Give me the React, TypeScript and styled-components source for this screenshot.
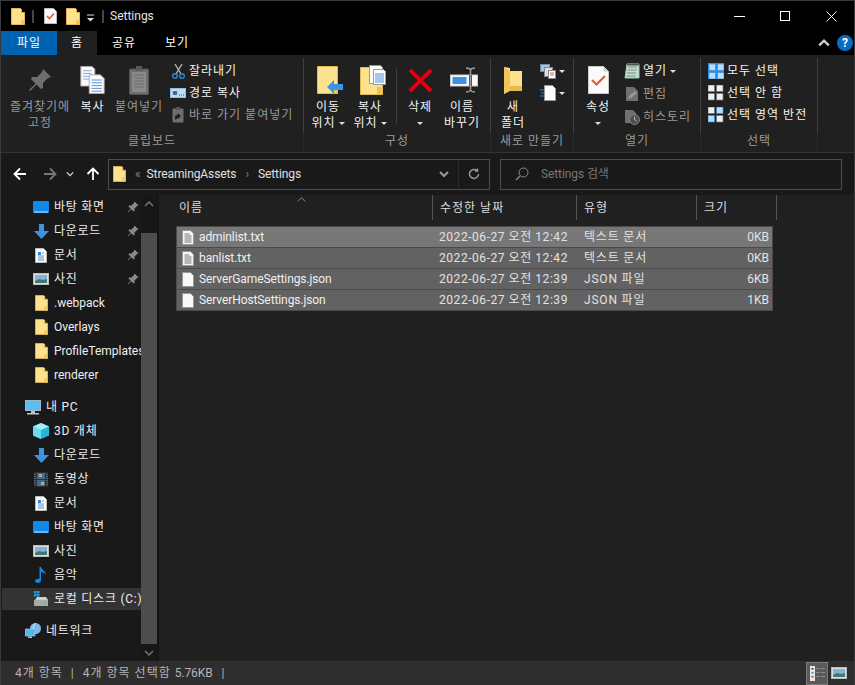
import styled, { createGlobalStyle } from "styled-components";

const GlobalStyle = createGlobalStyle`
  html, body {
    margin: 0;
    padding: 0;
    background: #000;
  }
  * {
    box-sizing: border-box;
  }
  svg {
    display: block;
    flex-shrink: 0;
  }
`;

const Window = styled.div`
  width: 855px;
  height: 685px;
  display: flex;
  flex-direction: column;
  overflow: hidden;
  border: 1px solid #3a3a3a;
  border-bottom: 0;
  background: #202020;
  color: #fff;
  font-family: Roboto, "Noto Sans CJK KR", sans-serif;
  font-size: 12px;
  line-height: 16px;
  letter-spacing: 1px;
`;

const Latin = styled.span`
  letter-spacing: -0.1px;
`;

const TitleBar = styled.div`
  height: 30px;
  display: flex;
  align-items: center;
  background: #000;
  padding-left: 10px;
`;

const TitleSep = styled.div<{ $l: number; $r: number }>`
  width: 2px;
  height: 13px;
  background: #444;
  margin: 0 ${(p) => p.$r}px 0 ${(p) => p.$l}px;
`;

const TitleSpace = styled.div<{ $w: number }>`
  width: ${(p) => p.$w}px;
`;

const TitleText = styled.span`
  flex: 1;
  color: #e6e6e6;
  letter-spacing: 0;
`;

const WinButton = styled.div`
  width: 46px;
  height: 30px;
  display: flex;
  align-items: center;
  justify-content: center;
`;

const TabRow = styled.div`
  height: 24px;
  display: flex;
  background: #000;
  align-items: stretch;
`;

const Tab = styled.div<{ $w: number; $kind?: "file" | "active" }>`
  width: ${(p) => p.$w}px;
  display: flex;
  align-items: center;
  justify-content: center;
  background: ${(p) =>
    p.$kind === "file" ? "#0063b1" : p.$kind === "active" ? "#202020" : "#000"};
`;

const TabSpacer = styled.div`
  flex: 1;
  display: flex;
  align-items: center;
  justify-content: flex-end;
  gap: 7px;
  padding-right: 1px;
`;

const HelpBadge = styled.div`
  width: 16px;
  height: 16px;
  border-radius: 50%;
  background: #0a6cc4;
  color: #fff;
  font-weight: 700;
  font-size: 12px;
  line-height: 16px;
  text-align: center;
  letter-spacing: 0;
`;

const Ribbon = styled.div`
  height: 98px;
  display: flex;
  background: #202020;
  border-bottom: 1px solid #333;
`;

const Group = styled.div<{ $w: number }>`
  width: ${(p) => p.$w}px;
  display: flex;
  flex-direction: column;
`;

const GroupBody = styled.div<{ $pl: number }>`
  height: 75px;
  display: flex;
  padding-left: ${(p) => p.$pl}px;
  padding-top: 3px;
  border-right: 1px solid #404040;
  margin-top: 3px;
`;

const GroupLabel = styled.div`
  flex: 1;
  display: flex;
  align-items: center;
  justify-content: center;
  padding-bottom: 3px;
  color: #9a9a9a;
  border-right: 1px solid #2a2a2a;
`;

const BigButton = styled.div<{ $w: number; $off?: boolean }>`
  width: ${(p) => p.$w}px;
  display: flex;
  flex-direction: column;
  align-items: center;
  color: ${(p) => (p.$off ? "#9a9a9a" : "#f2f2f2")};
  text-align: center;
  white-space: nowrap;
`;

const BigIcon = styled.div<{ $dx?: number }>`
  height: 38px;
  display: flex;
  align-items: center;
  justify-content: center;
  padding-left: ${(p) => p.$dx ?? 0}px;
`;

const ButtonLine = styled.div`
  display: flex;
  align-items: center;
  justify-content: center;
  gap: 3px;
  height: 16px;
`;

const Caret = styled.span`
  width: 0;
  height: 0;
  border-left: 3px solid transparent;
  border-right: 3px solid transparent;
  border-top: 3px solid #ddd;
  display: inline-block;
`;

const SmallColumn = styled.div<{ $ml: number; $gap: number }>`
  display: flex;
  flex-direction: column;
  gap: ${(p) => p.$gap}px;
  margin-left: ${(p) => p.$ml}px;
  padding-top: 2px;
`;

const SmallButton = styled.div<{ $off?: boolean }>`
  height: 16px;
  display: flex;
  align-items: center;
  gap: 3px;
  white-space: nowrap;
  color: ${(p) => (p.$off ? "#9a9a9a" : "#f2f2f2")};
`;

const IconSlot = styled.div`
  width: 16px;
  display: flex;
  justify-content: center;
`;

const VSep = styled.div`
  width: 1px;
  height: 55px;
  background: #404040;
  margin: 8px 0 0 5px;
`;

const MiniColumn = styled.div`
  display: flex;
  flex-direction: column;
  gap: 6px;
  margin-left: 8px;
  padding-top: 2px;
`;

const MiniButton = styled.div`
  display: flex;
  align-items: center;
  gap: 3px;
  height: 16px;
`;

const NavBar = styled.div`
  height: 42px;
  display: flex;
  align-items: center;
  background: #191919;
`;

const NavButtons = styled.div`
  width: 107px;
  display: flex;
  align-items: center;
  padding-left: 12px;
`;

const NavGap = styled.span<{ $w: number }>`
  width: ${(p) => p.$w}px;
`;

const AddressBox = styled.div<{ $w: number }>`
  width: ${(p) => p.$w}px;
  height: 31px;
  display: flex;
  align-items: center;
  border: 1px solid #4d4d4d;
  background: #191919;
`;

const AddressDivider = styled.span`
  width: 1px;
  height: 100%;
  background: #2b2b2b;
`;

const Crumb = styled.span<{ $c?: string; $ml: number }>`
  color: ${(p) => p.$c ?? "#e0e0e0"};
  margin-left: ${(p) => p.$ml}px;
  letter-spacing: -0.1px;
`;

const AddressFill = styled.span`
  flex: 1;
`;

const Body = styled.div`
  flex: 1;
  min-height: 0;
  display: flex;
`;

const NavPane = styled.div`
  width: 158px;
  display: flex;
  background: #191919;
  border-right: 2px solid #141414;
`;

const NavList = styled.div`
  width: 140px;
  padding: 1px 0 0 1px;
  overflow: hidden;
`;

const NavRow = styled.div<{ $indent: number; $gapTop?: boolean; $active?: boolean }>`
  height: 22px;
  margin: ${(p) => (p.$gapTop ? "10px" : "2px")} 0 0;
  display: flex;
  align-items: center;
  padding-left: ${(p) => p.$indent}px;
  gap: 5px;
  white-space: nowrap;
  color: #eee;
  background: ${(p) => (p.$active ? "#333" : "transparent")};
  &:first-child {
    margin-top: 0;
  }
`;

const NavName = styled.span<{ $latin?: boolean }>`
  flex: 1;
  overflow: hidden;
  letter-spacing: ${(p) => (p.$latin ? "0" : "0.75px")};
`;

const PinSlot = styled.div`
  width: 16px;
  display: flex;
  justify-content: center;
`;

const ScrollBar = styled.div`
  width: 16px;
  display: flex;
  flex-direction: column;
  background: #171717;
`;

const ScrollArrow = styled.div`
  height: 17px;
  display: flex;
  align-items: center;
  justify-content: center;
`;

const ScrollThumb = styled.div`
  flex: 1;
  margin-top: 21px;
  background: #4d4d4d;
`;

const ContentPane = styled.div`
  flex: 1;
  position: relative;
  background: #202020;
`;

const HeaderRow = styled.div`
  height: 25px;
  display: flex;
  padding-left: 13px;
`;

const HeaderCell = styled.div<{ $w: number }>`
  width: ${(p) => p.$w}px;
  display: flex;
  align-items: center;
  padding-left: 7px;
  border-right: 1px solid #555;
  color: #ddd;
`;

const SortArrow = styled.div`
  position: absolute;
  top: 0;
  left: 138px;
`;

const FileList = styled.div`
  margin: 6px 0 0 17px;
  width: 597px;
  display: flex;
  flex-direction: column;
  border: 1px solid #4a4a4a;
  background: #4a4a4a;
  gap: 1px;
`;

const FileRow = styled.div<{ $hover?: boolean }>`
  height: 20px;
  display: grid;
  grid-template-columns: 262px 145px 112px 1fr;
  align-items: center;
  background: ${(p) => (p.$hover ? "#777" : "#626262")};
  color: #f0f0f0;
  white-space: nowrap;
`;

const NameCell = styled.div`
  display: flex;
  align-items: center;
  gap: 5px;
  padding-left: 5px;
`;

const DateCell = styled.div`
  color: #e2e2e2;
  letter-spacing: 0.55px;
`;

const TypeCell = styled.div`
  color: #e2e2e2;
  letter-spacing: 0.8px;
`;

const SizeCell = styled.div`
  text-align: right;
  padding-right: 3px;
  letter-spacing: 0;
  color: #e2e2e2;
`;

const StatusBar = styled.div`
  height: 24px;
  display: flex;
  align-items: center;
  background: #2e2e2e;
  color: #b4b4b4;
  padding-left: 14px;
  white-space: nowrap;
`;

const StatusText = styled.span<{ $ml: number }>`
  margin-left: ${(p) => p.$ml}px;
`;

const ViewButtons = styled.div`
  margin-left: auto;
  display: flex;
  align-items: center;
  padding-right: 4px;
  height: 100%;
`;

const ViewButton = styled.div<{ $on?: boolean }>`
  width: 22px;
  height: 23px;
  display: flex;
  align-items: center;
  justify-content: center;
  background: ${(p) => (p.$on ? "#5a5a5a" : "transparent")};
  border: 1px solid ${(p) => (p.$on ? "#7a7a7a" : "transparent")};
`;

/* ---- icons ---- */

const Folder = ({ w = 14, h = 17 }: { w?: number; h?: number }) => (
  <svg width={w} height={h} viewBox="0 0 14 17">
    <path d="M.5.5h9l1 1v3h3v12H.5z" fill="#fde28e" stroke="#e3b652" />
    <path d="M10 12h3.500v4.500H10z" fill="#f3c659" />
  </svg>
);

const NoteCheck = () => (
  <svg width="13" height="16" viewBox="0 0 13 16">
    <path d="M.5.5h9l3 3v12H.5z" fill="#fafafa" stroke="#bbb" />
    <path d="M3 8l2.400 2.600L10 5.500" fill="none" stroke="#e0562a" strokeWidth="1.500" />
  </svg>
);

const Chevron = ({ dir, c = "#ccc", s = 10, sw = 1.5 }: { dir: "up" | "down"; c?: string; s?: number; sw?: number }) => (
  <svg width={s} height={s} viewBox="0 0 10 10">
    <path d={dir === "up" ? "M1 7l4-4 4 4" : "M1 3l4 4 4-4"} fill="none" stroke={c} strokeWidth={sw} />
  </svg>
);

const Arrow = ({ dir, c }: { dir: "left" | "right" | "up"; c: string }) => {
  const rotate = dir === "left" ? 0 : dir === "right" ? 180 : 90;
  return (
    <svg width="14" height="14" viewBox="0 0 14 14" style={{ transform: `rotate(${rotate}deg)` }}>
      <path d="M13 7H1.500M7 1.500L1.500 7 7 12.500" fill="none" stroke={c} strokeWidth="1.800" />
    </svg>
  );
};

const Pin = ({ s = 12, c = "#8a8a8a" }: { s?: number; c?: string }) => (
  <svg width={s} height={s} viewBox="0 0 24 24">
    <path d="M15 1l8 8-3 1-5 5 0 5-2 1-4.500-4.500L2 23l-1-1 6.500-6.500L3 11l1-2h5l5-5z" fill={c} />
  </svg>
);

const Copy = () => (
  <svg width="25" height="28" viewBox="0 0 26 30">
    <path d="M.5.5h12l3 3v18H.5z" fill="#fafafa" stroke="#aaa" />
    <path d="M3 5h9M3 8h9M3 11h9M3 14h9" stroke="#7ea6dc" />
    <path d="M9.500 9.500h12l4 4v16h-16z" fill="#fafafa" stroke="#aaa" />
    <path d="M12 15h11M12 18h11M12 21h11M12 24h11M12 27h11" stroke="#4f8ddb" />
  </svg>
);

const Clipboard = () => (
  <svg width="20" height="29" viewBox="0 0 20 29">
    <rect x=".5" y="3" width="19" height="25.500" rx="1" fill="#6f6f6f" stroke="#555" />
    <rect x="3" y="6" width="14" height="20" fill="#8a8a8a" />
    <path d="M5 9h10M5 12h10M5 15h10M5 18h10M5 21h10" stroke="#6a6a6a" />
    <rect x="7" y="0" width="6" height="5" fill="#5a5a5a" />
  </svg>
);

const Scissors = () => (
  <svg width="13" height="16" viewBox="0 0 13 16">
    <path d="M3 1l6 10M10 1L4 11" stroke="#b5b5b5" strokeWidth="1.400" fill="none" />
    <circle cx="3" cy="13" r="2.300" fill="none" stroke="#2f86d6" strokeWidth="1.400" />
    <circle cx="10" cy="13" r="2.300" fill="none" stroke="#2f86d6" strokeWidth="1.400" />
  </svg>
);

const PathCopy = () => (
  <svg width="16" height="10" viewBox="0 0 16 10">
    <rect x=".5" y=".5" width="15" height="9" fill="#bcdcf7" stroke="#8fbde6" />
    <path d="M3 3l1 4 1-4 1 4 1-4M9 7h1M11 7h1M13 7h1" stroke="#234" fill="none" strokeWidth=".8" />
  </svg>
);

const ShortcutPaste = () => (
  <svg width="12" height="16" viewBox="0 0 12 16">
    <rect x=".5" y="1.500" width="11" height="14" rx="1" fill="#6f6f6f" />
    <rect x="4" y="0" width="4" height="3" fill="#555" />
    <path d="M3 13V9l3-2v-1l3 3-3 3v-1l-1.500 1z" fill="#222" />
  </svg>
);

const MoveTo = () => (
  <svg width="26" height="28" viewBox="0 0 26 28">
    <path d="M.5.5h20v27H.5z" fill="#fde28e" stroke="#e3b652" />
    <path d="M17 21h3.500v6.500H17z" fill="#f0c259" />
    <path d="M10 21l7-7v4h9v6h-9v4z" fill="#3c94e6" />
  </svg>
);

const CopyTo = () => (
  <svg width="26" height="30" viewBox="0 0 26 30">
    <path d="M.5 2.500h22v27H.5z" fill="#fde28e" stroke="#e3b652" />
    <path d="M17 22h5.500v7.500H17z" fill="#f0c259" />
    <path d="M9.500.5h11l2 2v16h-13z" fill="#fff" stroke="#999" />
    <path d="M13.500 4.500h10l2 2v13h-12z" fill="#fff" stroke="#999" />
    <path d="M15 9h9M15 11h9M15 13h9M15 15h9M15 17h9" stroke="#4f8ddb" />
  </svg>
);

const DeleteX = () => (
  <svg width="25" height="25" viewBox="0 0 26 26">
    <path d="M2 2l22 22M24 2L2 24" stroke="#e00012" strokeWidth="4" />
  </svg>
);

const Rename = () => (
  <svg width="28" height="26" viewBox="0 0 28 26">
    <rect x=".5" y="8" width="27" height="11" fill="#fafafa" stroke="#ccc" />
    <rect x="2.500" y="10" width="14" height="7" fill="#3a93e4" />
    <rect x="19" y="8" width="3" height="11" fill="#444" />
    <path d="M16 1c3 0 4 1 4.500 2 .5-1 1.500-2 4.500-2M16 25c3 0 4-1 4.500-2 .5 1 1.500 2 4.500 2M20.500 3v20" fill="none" stroke="#999" strokeWidth="1.500" />
  </svg>
);

const NewFolder = () => (
  <svg width="18" height="27" viewBox="0 0 18 27">
    <path d="M0 0l6 1v3h12v20H5l-5 3z" fill="#fde08a" />
    <path d="M0 0l6 4v20l-6 3z" fill="#f2c45c" />
    <path d="M6 19h12v5H6z" fill="#e9b94a" />
  </svg>
);

const NewItem = () => (
  <svg width="16" height="15" viewBox="0 0 16 15">
    <rect x=".5" y=".5" width="9" height="7" fill="#9cc8ef" stroke="#789" />
    <rect x="4.500" y="3.500" width="8" height="9" fill="#ddd" stroke="#888" />
    <rect x="8.500" y="6.500" width="7" height="8" fill="#fff" stroke="#888" />
    <path d="M10 9h4M10 11h4" stroke="#d66" />
  </svg>
);

const EasyAccess = () => (
  <svg width="16" height="16" viewBox="0 0 16 16">
    <path d="M4.500.5h8l3 3v12h-11z" fill="#fafafa" stroke="#999" />
    <path d="M0 5h4M1 8h3M0 11h4" stroke="#2f86d6" />
  </svg>
);

const Properties = () => (
  <svg width="21" height="28" viewBox="0 0 21 28">
    <path d="M.5.5h15l5 5v22H.5z" fill="#fafafa" stroke="#ccc" />
    <path d="M15.500.5v5h5" fill="#ccc" />
    <path d="M4 14l4.500 4.500L17 10" fill="none" stroke="#ea5b28" strokeWidth="2.200" />
  </svg>
);

const Notepad = () => (
  <svg width="16" height="16" viewBox="0 0 16 16">
    <path d="M3 1h12v14H1z" fill="#c8e0c8" stroke="#9cb" />
    <path d="M4 4h9M3.500 7h9M3 10h9M2.500 13h9" stroke="#789" />
    <path d="M3 1h12v1.500H3z" fill="#555" />
  </svg>
);

const EditIcon = () => (
  <svg width="14" height="16" viewBox="0 0 14 16">
    <path d="M1 1h8l4 4v10H1z" fill="#6f6f6f" />
    <path d="M3 13l1-3 6-5 2 2-6 5z" fill="#999" />
  </svg>
);

const History = () => (
  <svg width="16" height="16" viewBox="0 0 16 16">
    <path d="M1 1h8l3 3v10H1z" fill="#6f6f6f" />
    <circle cx="10.500" cy="10.500" r="5" fill="#4e4e4e" stroke="#888" />
    <path d="M10.500 7.500v3l2 1.500" stroke="#bbb" fill="none" />
  </svg>
);

const Grid4 = ({ kind }: { kind: "all" | "none" | "invert" }) => {
  const cells = [
    [0, 0, false],
    [8.5, 0, kind === "invert"],
    [0, 8.5, kind === "invert"],
    [8.5, 8.5, false],
  ] as const;
  return (
    <svg width="16" height="16" viewBox="0 0 16 16">
      {kind === "all" && <rect width="16" height="16" fill="#2f8fdf" />}
      {cells.map(([x, y, on], i) => {
        const blue = kind === "all" || on;
        return (
          <rect
            key={i}
            x={x + (kind === "all" ? 1 : 0)}
            y={y + (kind === "all" ? 1 : 0)}
            width="6.500"
            height="6.500"
            fill={blue ? "#bcdcf7" : "#f0f0f0"}
            stroke={blue ? "#2f8fdf" : "#777"}
            strokeWidth=".7"
          />
        );
      })}
    </svg>
  );
};

const Desktop = () => (
  <svg width="16" height="12" viewBox="0 0 16 12">
    <rect width="16" height="12" rx="1" fill="#0f8ae6" />
    <path d="M1 11h14" stroke="#bfe3fb" />
  </svg>
);

const Download = () => (
  <svg width="15" height="15" viewBox="0 0 15 15">
    <path d="M5 0h5v7h5l-7.500 8L0 7h5z" fill="#3a94e4" />
  </svg>
);

const DocIcon = () => (
  <svg width="12" height="15" viewBox="0 0 12 15">
    <path d="M.5.5h8l3 3v11H.5z" fill="#fafafa" stroke="#bbb" />
    <path d="M3 4h3v3H3z" fill="#2f86d6" />
    <path d="M3 8h6M3 10h6M3 12h6M7 5h2" stroke="#5d93cf" />
  </svg>
);

const Picture = () => (
  <svg width="16" height="12" viewBox="0 0 16 12">
    <rect x=".5" y=".5" width="15" height="11" fill="#ddd" stroke="#bbb" />
    <rect x="2" y="2" width="12" height="8" fill="#7fb5d8" />
    <path d="M2 8l4-2 4 1 4-1v4H2z" fill="#3f7a6b" />
  </svg>
);

const Monitor = () => (
  <svg width="16" height="15" viewBox="0 0 16 15">
    <rect x=".5" y=".5" width="15" height="10" fill="#56c0f2" stroke="#9fb5c4" />
    <path d="M6 11h4v2H6zM2 13h12v1.500H2z" fill="#b9c5cd" />
  </svg>
);

const Cube = () => (
  <svg width="16" height="16" viewBox="0 0 16 16">
    <path d="M8 0l8 3.500v9L8 16l-8-3.500v-9z" fill="#25b6d8" />
    <path d="M8 0l8 3.500L8 7 0 3.500z" fill="#a6ecf5" />
    <path d="M0 3.500L8 7v9l-8-3.500z" fill="#6bdcec" />
  </svg>
);

const Film = () => (
  <svg width="14" height="15" viewBox="0 0 14 15">
    <rect width="14" height="15" fill="#2e2e2e" />
    <rect x="3" y="1" width="8" height="6" fill="#3d6d9c" />
    <rect x="3" y="8" width="8" height="6" fill="#3d6d9c" />
    <path d="M5 2h3v3H5zM7 10h3v3H7z" fill="#d9a33a" />
    <path d="M1 2v11M13 2v11" stroke="#999" strokeDasharray="1 1" />
  </svg>
);

const Music = () => (
  <svg width="12" height="16" viewBox="0 0 12 16">
    <path d="M4.500 0h1.500c.5 3 5 4 5 8-1-2-3-3-5-3v8.500c0 1.500-1.500 2.500-3 2.500S0 15 0 13.800s1.800-2.300 4.500-2z" fill="#0f8ae6" />
  </svg>
);

const Drive = () => (
  <svg width="16" height="16" viewBox="0 0 16 16">
    <path d="M1 0h2.500v2.500H1zM4 0h2.500v2.500H4zM1 3h2.500v2.500H1zM4 3h2.500v2.500H4z" fill="#1d9be0" />
    <path d="M2 9l2-3h9l2 3z" fill="#cfcfcf" />
    <rect x="1" y="9" width="14" height="6" fill="#a9a9a9" />
    <rect x="11" y="11" width="2" height="1.500" fill="#2fd05a" />
  </svg>
);

const Network = () => (
  <svg width="17" height="16" viewBox="0 0 17 16">
    <circle cx="10.500" cy="5.500" r="5.500" fill="#7cb9e6" />
    <path d="M10.500 0c-3 3-3 8 0 11" stroke="#d5ecfb" fill="none" />
    <rect x="0" y="6" width="10" height="7" fill="#4fb8ee" stroke="#b9c5cd" strokeWidth=".6" />
    <path d="M3 13.500h4V15H3z" fill="#b9c5cd" />
  </svg>
);

const TextFile = () => (
  <svg width="12" height="15" viewBox="0 0 12 15">
    <path d="M.5.5h8l3 3v11H.5z" fill="#f6f6f6" stroke="#999" />
    <path d="M2.500 4h5M2.500 6h7M2.500 8h7M2.500 10h7M2.500 12h7" stroke="#777" />
  </svg>
);

const BlankFile = () => (
  <svg width="12" height="15" viewBox="0 0 12 15">
    <path d="M.5.5h8l3 3v11H.5z" fill="#fafafa" stroke="#999" />
  </svg>
);

const Search = () => (
  <svg width="14" height="14" viewBox="0 0 14 14">
    <circle cx="8.500" cy="5.500" r="4.500" fill="none" stroke="#8a8a8a" />
    <path d="M5 9l-4 4" stroke="#8a8a8a" strokeWidth="1.300" />
  </svg>
);

const Refresh = () => (
  <svg width="12" height="12" viewBox="0 0 12 12">
    <path d="M10.500 6a4.500 4.500 0 1 1-1.500-3.400M9.500 .5v2.500H7" fill="none" stroke="#9a9a9a" strokeWidth="1.500" />
  </svg>
);

const DetailsView = () => (
  <svg width="15" height="13" viewBox="0 0 15 13" style={{ overflow: "visible" }}>
    <rect x="0" y="-1" width="5" height="15" fill="#e8e8e8" />
    <path d="M1.500 1h2v1.500h-2z" fill="#333" />
    <path d="M1.500 5h2v1.500h-2z" fill="#2f86d6" />
    <path d="M1.500 9h2v1.500h-2z" fill="#d03030" />
    <path d="M6 1.500h4M11 1.500h4M6 5.500h4M11 5.500h4M6 9.500h4M11 9.500h4" stroke="#8a8a8a" />
  </svg>
);

const navItems = [
  { name: "바탕 화면", icon: <Desktop />, pin: true },
  { name: "다운로드", icon: <Download />, pin: true },
  { name: "문서", icon: <DocIcon />, pin: true },
  { name: "사진", icon: <Picture />, pin: true },
  { name: ".webpack", icon: <Folder w={13} h={16} />, latin: true },
  { name: "Overlays", icon: <Folder w={13} h={16} />, latin: true },
  { name: "ProfileTemplates", icon: <Folder w={13} h={16} />, latin: true },
  { name: "renderer", icon: <Folder w={13} h={16} />, latin: true },
  { name: "내 PC", icon: <Monitor />, top: true, gapTop: true },
  { name: "3D 개체", icon: <Cube /> },
  { name: "다운로드", icon: <Download /> },
  { name: "동영상", icon: <Film /> },
  { name: "문서", icon: <DocIcon /> },
  { name: "바탕 화면", icon: <Desktop /> },
  { name: "사진", icon: <Picture /> },
  { name: "음악", icon: <Music /> },
  { name: "로컬 디스크 (C:)", icon: <Drive />, active: true },
  { name: "네트워크", icon: <Network />, top: true, gapTop: true },
];

const files = [
  { name: "adminlist.txt", date: "2022-06-27 오전 12:42", type: "텍스트 문서", size: "0KB", text: true },
  { name: "banlist.txt", date: "2022-06-27 오전 12:42", type: "텍스트 문서", size: "0KB", text: true },
  { name: "ServerGameSettings.json", date: "2022-06-27 오전 12:39", type: "JSON 파일", size: "6KB" },
  { name: "ServerHostSettings.json", date: "2022-06-27 오전 12:39", type: "JSON 파일", size: "1KB" },
];

function App() {
  return (
    <>
      <GlobalStyle />
      <Window>
        <TitleBar>
          <Folder />
          <TitleSep $l={7} $r={10} />
          <NoteCheck />
          <TitleSpace $w={9} />
          <Folder />
          <svg width="9" height="8" viewBox="0 0 9 8" style={{ margin: "3px 7px 0 6px" }}>
            <path d="M1 1h7" stroke="#ddd" />
            <path d="M1 4h7L4.500 7.500z" fill="#ddd" />
          </svg>
          <TitleSep $l={0} $r={6} />
          <TitleText>Settings</TitleText>
          <WinButton>
            <svg width="11" height="10" viewBox="0 0 11 10"><path d="M0 5.500h11" stroke="#fff" /></svg>
          </WinButton>
          <WinButton>
            <svg width="10" height="10" viewBox="0 0 10 10"><rect x=".5" y=".5" width="9" height="9" fill="none" stroke="#fff" /></svg>
          </WinButton>
          <WinButton>
            <svg width="11" height="11" viewBox="0 0 11 11"><path d="M.5.5l10 10M10.500.5l-10 10" stroke="#fff" /></svg>
          </WinButton>
        </TitleBar>
        <TabRow>
          <Tab $w={56} $kind="file">파일</Tab>
          <Tab $w={40} $kind="active">홈</Tab>
          <Tab $w={54}>공유</Tab>
          <Tab $w={52}>보기</Tab>
          <TabSpacer>
            <Chevron dir="up" c="#ccc" s={12} sw={2} />
            <HelpBadge>?</HelpBadge>
          </TabSpacer>
        </TabRow>
        <Ribbon>
          <Group $w={303}>
            <GroupBody $pl={7}>
              <BigButton $w={64} $off>
                <BigIcon><Pin s={24} c="#6e6e6e" /></BigIcon>
                <ButtonLine>즐겨찾기에</ButtonLine>
                <ButtonLine>고정</ButtonLine>
              </BigButton>
              <BigButton $w={41}>
                <BigIcon><Copy /></BigIcon>
                <ButtonLine>복사</ButtonLine>
              </BigButton>
              <BigButton $w={52} $off>
                <BigIcon><Clipboard /></BigIcon>
                <ButtonLine>붙여넣기</ButtonLine>
              </BigButton>
              <SmallColumn $ml={5} $gap={6}>
                <SmallButton><IconSlot><Scissors /></IconSlot>잘라내기</SmallButton>
                <SmallButton><IconSlot><PathCopy /></IconSlot>경로 복사</SmallButton>
                <SmallButton $off><IconSlot><ShortcutPaste /></IconSlot>바로 가기 붙여넣기</SmallButton>
              </SmallColumn>
            </GroupBody>
            <GroupLabel>클립보드</GroupLabel>
          </Group>
          <Group $w={187}>
            <GroupBody $pl={3}>
              <BigButton $w={42}>
                <BigIcon $dx={4}><MoveTo /></BigIcon>
                <ButtonLine>이동</ButtonLine>
                <ButtonLine>위치<Caret /></ButtonLine>
              </BigButton>
              <BigButton $w={42}>
                <BigIcon $dx={5}><CopyTo /></BigIcon>
                <ButtonLine>복사</ButtonLine>
                <ButtonLine>위치<Caret /></ButtonLine>
              </BigButton>
              <VSep />
              <BigButton $w={46}>
                <BigIcon><DeleteX /></BigIcon>
                <ButtonLine>삭제</ButtonLine>
                <ButtonLine><Caret /></ButtonLine>
              </BigButton>
              <BigButton $w={38}>
                <BigIcon $dx={3}><Rename /></BigIcon>
                <ButtonLine>이름</ButtonLine>
                <ButtonLine>바꾸기</ButtonLine>
              </BigButton>
            </GroupBody>
            <GroupLabel>구성</GroupLabel>
          </Group>
          <Group $w={83}>
            <GroupBody $pl={3}>
              <BigButton $w={38}>
                <BigIcon><NewFolder /></BigIcon>
                <ButtonLine>새</ButtonLine>
                <ButtonLine>폴더</ButtonLine>
              </BigButton>
              <MiniColumn>
                <MiniButton><NewItem /><Caret /></MiniButton>
                <MiniButton><EasyAccess /><Caret /></MiniButton>
              </MiniColumn>
            </GroupBody>
            <GroupLabel>새로 만들기</GroupLabel>
          </Group>
          <Group $w={127}>
            <GroupBody $pl={6}>
              <BigButton $w={36}>
                <BigIcon><Properties /></BigIcon>
                <ButtonLine>속성</ButtonLine>
                <ButtonLine><Caret /></ButtonLine>
              </BigButton>
              <SmallColumn $ml={8} $gap={7}>
                <SmallButton><IconSlot><Notepad /></IconSlot>열기 <Caret /></SmallButton>
                <SmallButton $off><IconSlot><EditIcon /></IconSlot>편집</SmallButton>
                <SmallButton $off><IconSlot><History /></IconSlot>히스토리</SmallButton>
              </SmallColumn>
            </GroupBody>
            <GroupLabel>열기</GroupLabel>
          </Group>
          <Group $w={117}>
            <GroupBody $pl={7}>
              <SmallColumn $ml={0} $gap={6}>
                <SmallButton><IconSlot><Grid4 kind="all" /></IconSlot>모두 선택</SmallButton>
                <SmallButton><IconSlot><Grid4 kind="none" /></IconSlot>선택 안 함</SmallButton>
                <SmallButton><IconSlot><Grid4 kind="invert" /></IconSlot>선택 영역 반전</SmallButton>
              </SmallColumn>
            </GroupBody>
            <GroupLabel>선택</GroupLabel>
          </Group>
        </Ribbon>
        <NavBar>
          <NavButtons>
            <Arrow dir="left" c="#fff" />
            <NavGap $w={16} />
            <Arrow dir="right" c="#777" />
            <NavGap $w={9} />
            <Chevron dir="down" c="#ddd" s={8} />
            <NavGap $w={12} />
            <Arrow dir="up" c="#fff" />
          </NavButtons>
          <AddressBox $w={382}>
            <NavGap $w={4} />
            <Folder w={13} h={16} />
            <Crumb $ml={9} $c="#888">«</Crumb>
            <Crumb $ml={6}>StreamingAssets</Crumb>
            <Crumb $ml={9} $c="#888">›</Crumb>
            <Crumb $ml={9}>Settings</Crumb>
            <AddressFill />
            <Chevron dir="down" c="#999" sw={2} />
            <NavGap $w={9} />
            <AddressDivider />
            <NavGap $w={9} />
            <Refresh />
            <NavGap $w={9} />
          </AddressBox>
          <NavGap $w={10} />
          <AddressBox $w={342}>
            <NavGap $w={14} />
            <Search />
            <Crumb $ml={12} $c="#777">Settings 검색</Crumb>
          </AddressBox>
        </NavBar>
        <Body>
          <NavPane>
            <NavList>
              {navItems.map((item, i) => (
                <NavRow key={i} $indent={item.top ? 23 : 31} $gapTop={item.gapTop} $active={item.active}>
                  <IconSlot>{item.icon}</IconSlot>
                  <NavName $latin={item.latin}>{item.name}</NavName>
                  {item.pin && <PinSlot><Pin /></PinSlot>}
                </NavRow>
              ))}
            </NavList>
            <ScrollBar>
              <ScrollArrow><Chevron dir="up" c="#777" /></ScrollArrow>
              <ScrollThumb />
              <ScrollArrow><Chevron dir="down" c="#777" /></ScrollArrow>
            </ScrollBar>
          </NavPane>
          <ContentPane>
            <SortArrow><Chevron dir="up" c="#999" s={9} sw={1} /></SortArrow>
            <HeaderRow>
              <HeaderCell $w={261}>이름</HeaderCell>
              <HeaderCell $w={144}>수정한 날짜</HeaderCell>
              <HeaderCell $w={120}>유형</HeaderCell>
              <HeaderCell $w={80}>크기</HeaderCell>
            </HeaderRow>
            <FileList>
              {files.map((f, i) => (
                <FileRow key={f.name} $hover={i === 0}>
                  <NameCell>
                    {f.text ? <TextFile /> : <BlankFile />}
                    <Latin>{f.name}</Latin>
                  </NameCell>
                  <DateCell>{f.date}</DateCell>
                  <TypeCell>{f.type}</TypeCell>
                  <SizeCell>{f.size}</SizeCell>
                </FileRow>
              ))}
            </FileList>
          </ContentPane>
        </Body>
        <StatusBar>
          4개 항목
          <StatusText $ml={8}>|</StatusText>
          <StatusText $ml={8}>4개 항목 선택함 <Latin>5.76KB</Latin></StatusText>
          <StatusText $ml={9}>|</StatusText>
          <ViewButtons>
            <ViewButton $on><DetailsView /></ViewButton>
            <ViewButton><Picture /></ViewButton>
          </ViewButtons>
        </StatusBar>
      </Window>
    </>
  );
}

export default App;
